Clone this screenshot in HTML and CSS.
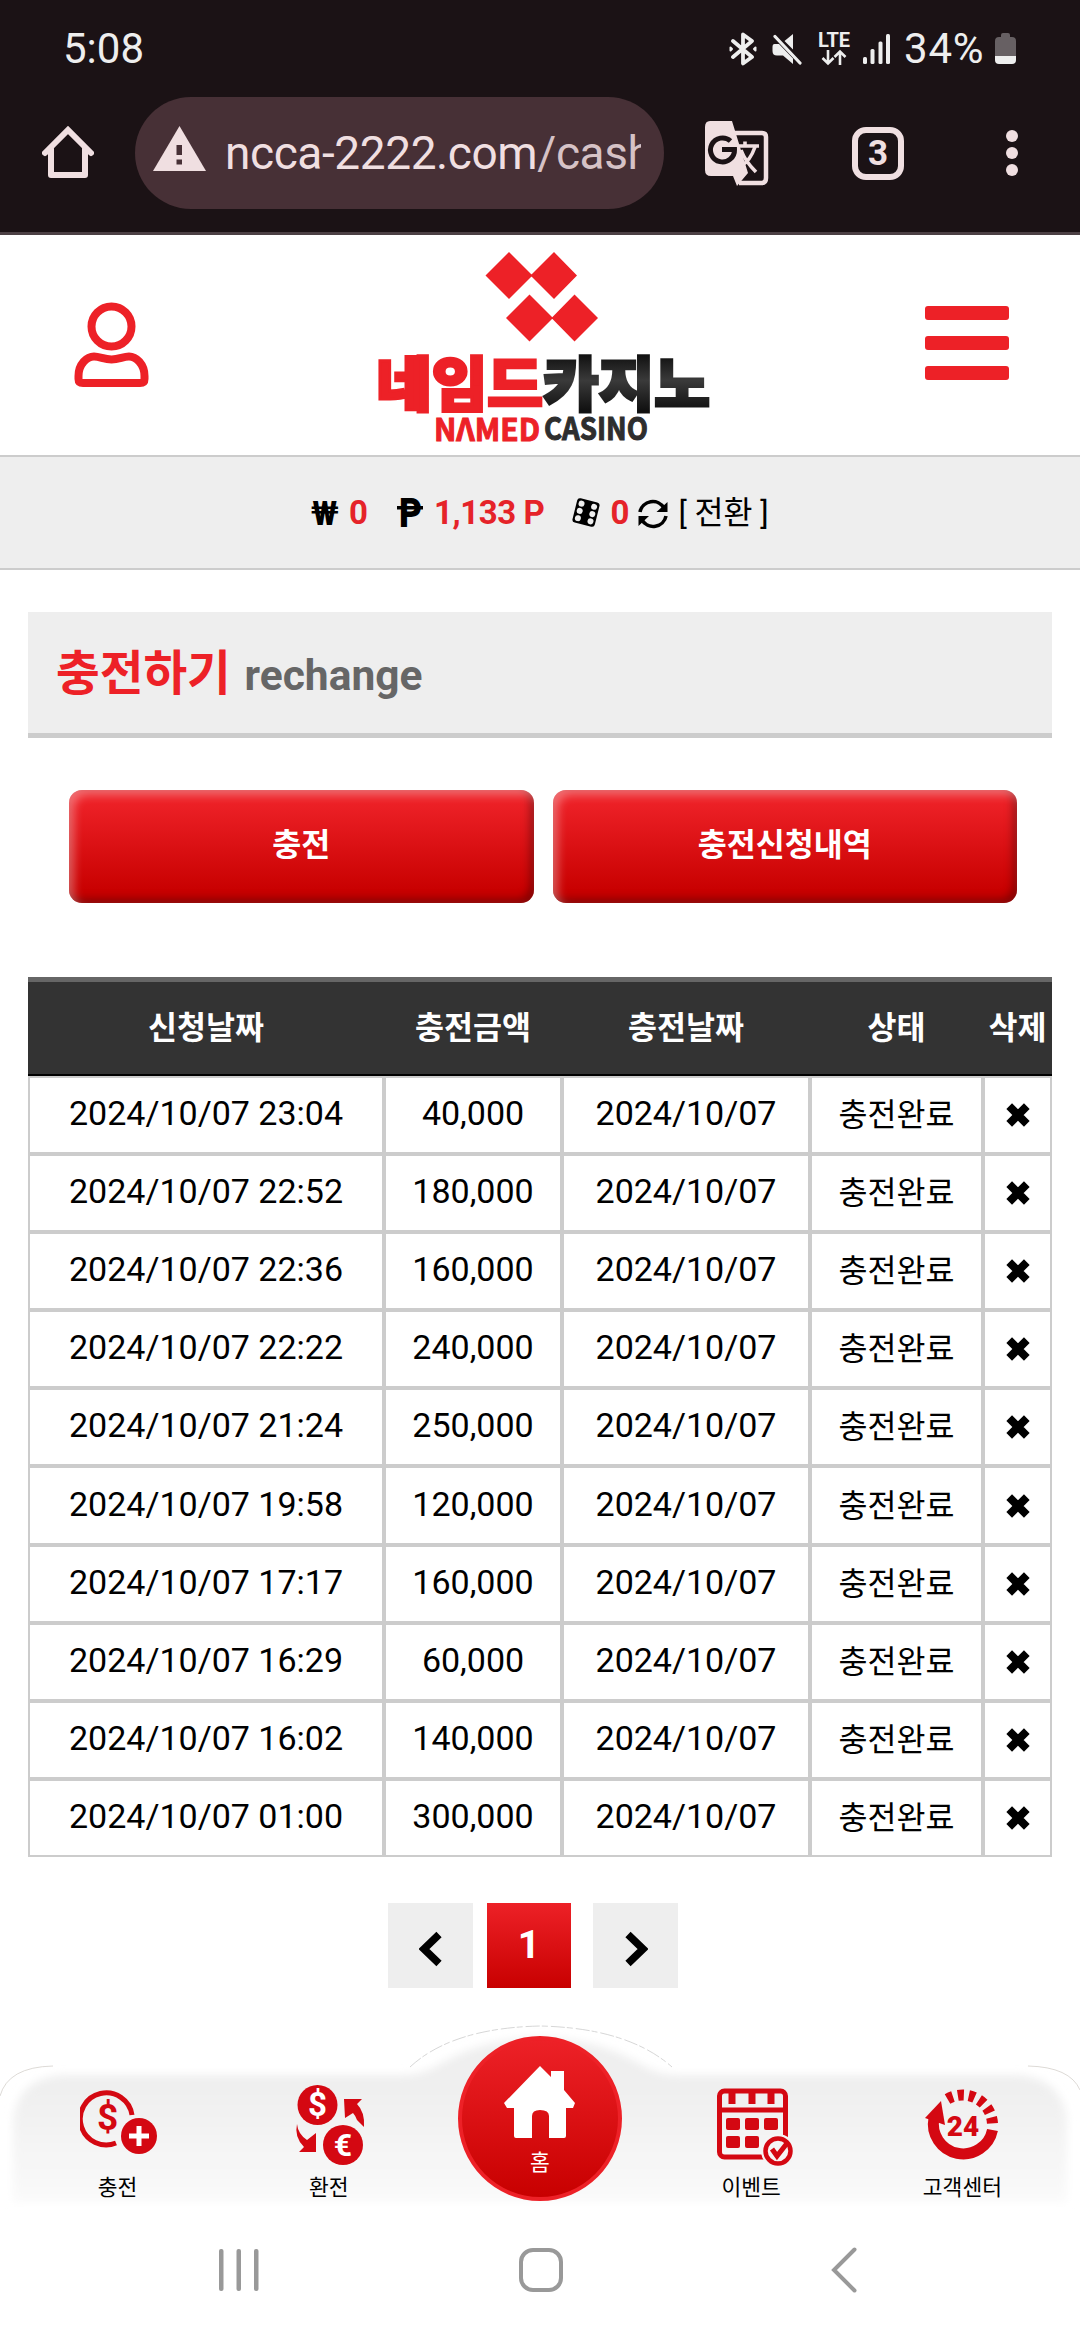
FILE: index.html
```html
<!DOCTYPE html>
<html lang="ko">
<head>
  <meta charset="UTF-8">
  <meta name="viewport" content="width=device-width, initial-scale=1.0">
  <title>충전하기</title>
  <link rel="stylesheet" href="styles.css">
</head>
<body>
  <!-- phone status bar -->
  <div class="status-bar">
    <span class="clock">5:08</span>
    <div class="status-icons">
      <svg class="bluetooth" width="28" height="34" viewBox="0 0 28 34" fill="none" stroke="#eee" stroke-width="3.8" stroke-linejoin="round" stroke-linecap="round">
        <path d="M4 9 L23 25 L14 31.500 V2.500 L23 9 L4 25"/>
        <path d="M1.500 15.500 V18.500 L3 17Z M26.500 15.500 V18.500 L25 17Z" stroke-width="2"/>
      </svg>
      <svg class="mute" width="32" height="32" viewBox="0 0 32 32">
        <path d="M2.500 11 H8 L22 25.500 V31 L12 22.500 H6 Q1.500 22.500 1.500 18 V14 Q1.500 11 3.500 11Z M13.500 8 L22 1 V16.500Z" fill="#eee"/>
        <path d="M4 3.500 L29 30" stroke="#eee" stroke-width="3.200" stroke-linecap="round"/>
      </svg>
      <div class="lte">
        <span>LTE</span>
        <svg width="26" height="17" viewBox="0 0 26 17" fill="none" stroke="#eee" stroke-width="2.600">
          <path d="M7 1 V14 M1.500 9 L7 14.500 L12.500 9 M19 16 V3 M13.500 8 L19 2.500 L24.500 8"/>
        </svg>
      </div>
      <svg class="signal" width="28" height="32" viewBox="0 0 28 32" fill="#eee">
        <rect x="0" y="24" width="4" height="7" rx="1.500"/>
        <rect x="7.500" y="16" width="4" height="15" rx="1.500"/>
        <rect x="15.500" y="8.500" width="4" height="22.500" rx="1.500"/>
        <rect x="23" y="1" width="4" height="30" rx="1.500"/>
      </svg>
      <span class="battery-text">34%</span>
      <svg class="battery" width="21" height="32" viewBox="0 0 21 32">
        <path d="M6 2 Q6 0 8 0 H13 Q15 0 15 2 V4 H17 Q21 4 21 8 V23 H0 V8 Q0 4 4 4 H6Z" fill="#676063"/>
        <path d="M0 23 H21 V27 Q21 31 17 31 H4 Q0 31 0 27Z" fill="#eee"/>
      </svg>
    </div>
  </div>

  <!-- browser toolbar -->
  <div class="toolbar">
    <svg class="tb-home" width="52" height="54" viewBox="0 0 52 54" fill="none" stroke="#f0dfe1" stroke-width="6" stroke-linejoin="round" stroke-linecap="round">
      <path d="M3 27 L26 4 L49 27" stroke-linejoin="miter"/>
      <path d="M9 23 V49 H43 V23"/>
    </svg>
    <div class="url-box">
      <svg width="53" height="46" viewBox="0 0 53 46">
        <path d="M26.500 0 L53 45 H0Z" fill="#f0dfe1"/>
        <path d="M23.500 19 H29 V29 H23.500Z M23.500 33.500 H29 V38.500 H23.500Z" fill="#473036"/>
      </svg>
      <span class="url">ncca-2222.com<span class="path">/cash</span></span>
    </div>
    <svg class="tb-translate" width="64" height="65" viewBox="0 0 64 65">
      <path d="M29 12 H57 Q61 12 61 16 V57 Q61 62 57 62 H34" fill="none" stroke="#f0dfe1" stroke-width="4.500"/>
      <path d="M5 0 H27 L43 52 L32 65 L28 55 H6 Q0 55 0 49 V6 Q0 0 5 0Z" fill="#f0dfe1"/>
      <path d="M28 25 H54 M40 20.500 V26 M50 26 Q45 40 37 44 M36 29 Q40 40 51 51" fill="none" stroke="#f0dfe1" stroke-width="3.600"/>
      <path d="M25.500 20 A12 12 0 1 0 29.500 28.500 H17" fill="none" stroke="#1b1215" stroke-width="5"/>
    </svg>
    <span class="tabs">3</span>
    <svg class="tb-more" width="12" height="48" viewBox="0 0 12 48" fill="#f0dfe1">
      <circle cx="6" cy="7" r="6"/>
      <circle cx="6" cy="24" r="6"/>
      <circle cx="6" cy="41" r="6"/>
    </svg>
  </div>

  <!-- site header -->
  <header class="site-header">
    <svg class="user" width="76" height="86" viewBox="0 0 76 86" fill="none" stroke="#ed2127" stroke-width="8">
      <circle cx="37.500" cy="24.500" r="20"/>
      <path d="M4.500 74 C4.500 62 13 54.500 20 54.500 C26 54.500 30 57.500 37.500 57.500 C45 57.500 49 54.500 55 54.500 C62 54.500 70.500 62 70.500 74 V77 Q70.500 81 66 81 H9 Q4.500 81 4.500 77Z"/>
    </svg>
    <svg class="logo" width="336" height="194" viewBox="0 0 336 194">
      <defs>
        <linearGradient id="dark" x1="0" y1="0" x2="0" y2="1">
          <stop offset="0.200" stop-color="#111"/>
          <stop offset="0.500" stop-color="#3a3a3a"/>
          <stop offset="0.850" stop-color="#111"/>
        </linearGradient>
      </defs>
      <g fill="#ed2127">
        <path d="M133 0 L156.500 23.500 L133 47 L109.500 23.500Z M178 0 L201 23.500 L178 47 L154.500 23.500Z"/>
        <path d="M153.500 42.500 L177 66 L153.500 89.500 L130 66Z M198.500 42.500 L222 66 L198.500 89.500 L175.500 66Z"/>
      </g>
      <text class="logo-ko" x="0" y="154" textLength="167" lengthAdjust="spacingAndGlyphs" fill="#ed2127" stroke="#ed2127">네임드</text>
      <text class="logo-ko" x="167" y="154" textLength="167" lengthAdjust="spacingAndGlyphs" fill="url(#dark)" stroke="url(#dark)">카지노</text>
      <text class="logo-en" x="58" y="189" textLength="106" lengthAdjust="spacingAndGlyphs" fill="#ed2127" stroke="#ed2127">NΛMED</text>
      <text class="logo-en" x="168" y="188" textLength="104" lengthAdjust="spacingAndGlyphs" fill="#2e2e2e" stroke="#2e2e2e">CASINO</text>
    </svg>
    <div class="menu"><i></i><i></i><i></i></div>
  </header>

  <div class="balance">
    <b class="won">₩</b>
    <b class="num">0</b>
    <svg class="peso" width="27" height="32" viewBox="0 0 27 32">
      <text x="2" y="30" textLength="23" lengthAdjust="spacingAndGlyphs">P</text>
      <rect x="0" y="9" width="26" height="3.500"/>
    </svg>
    <b class="num point">1,133 P</b>
    <svg class="dice" width="30" height="31" viewBox="0 0 30 31">
      <g transform="rotate(14 15 15.500)">
        <rect x="3.500" y="3" width="23" height="25" rx="3"/>
        <g fill="#eee">
          <circle cx="8.500" cy="8" r="3"/><circle cx="8.500" cy="15.500" r="3"/><circle cx="8.500" cy="23" r="3"/>
          <circle cx="21.500" cy="8" r="3"/><circle cx="21.500" cy="15.500" r="3"/><circle cx="21.500" cy="23" r="3"/>
        </g>
      </g>
    </svg>
    <b class="num">0</b>
    <svg class="refresh" width="30" height="32" viewBox="0 0 30 32">
      <path d="M2 14 A13 13 0 0 1 26 10 M28 18 A13 13 0 0 1 4 22" fill="none" stroke="#000" stroke-width="3.600"/>
      <path d="M29.500 4 V14 H18.500Z M0.500 28 V18 H11Z"/>
    </svg>
    <span class="change">[ 전환 ]</span>
  </div>

  <main class="content">
    <h1 class="title">충전하기 <span>rechange</span></h1>

    <div class="buttons">
      <button type="button">충전</button>
      <button type="button">충전신청내역</button>
    </div>

    <table class="history">
      <thead>
        <tr>
          <th class="c-req">신청날짜</th>
          <th class="c-amt">충전금액</th>
          <th class="c-date">충전날짜</th>
          <th class="c-state">상태</th>
          <th class="c-del">삭제</th>
        </tr>
      </thead>
      <tbody id="rows"></tbody>
    </table>

    <div class="paging">
      <a class="prev"><svg width="24" height="36" viewBox="0 0 24 36"><path d="M20 3.500 L5 18 L20 32.500" fill="none" stroke="#000" stroke-width="7.500"/></svg></a>
      <a class="on">1</a>
      <a class="next"><svg width="24" height="36" viewBox="0 0 24 36"><path d="M4 3.500 L19 18 L4 32.500" fill="none" stroke="#000" stroke-width="7.500"/></svg></a>
    </div>
  </main>

  <!-- bottom menu -->
  <nav class="bottom-nav">
    <svg class="nav-bg" width="1080" height="190" viewBox="0 0 1080 190">
      <defs>
        <linearGradient id="bar" x1="0" y1="0" x2="0" y2="1">
          <stop offset="0.300" stop-color="#efefef"/>
          <stop offset="1" stop-color="#fafafa"/>
        </linearGradient>
        <filter id="soft" x="-5%" y="-10%" width="110%" height="120%"><feGaussianBlur stdDeviation="4"/></filter>
      </defs>
      <path d="M13 182 V100 Q17 60 60 55 H405 Q424 54 440 44 Q484 18 540 18 Q596 18 640 44 Q656 54 675 55 H1020 Q1063 60 1067 100 V182Z" fill="url(#bar)" filter="url(#soft)"/>
      <path d="M0 76 Q8 47 53 46 M1028 46 Q1070 47 1080 70" fill="none" stroke="#d4d0cc" stroke-width="0.800"/>
      <path d="M410 47 Q452 8 540 6 Q628 8 672 47" fill="none" stroke="#ccc" stroke-width="0.800" stroke-dasharray="14 2 6 3"/>
    </svg>

    <a class="nav-item">
      <svg class="shift" width="80" height="82" viewBox="0 0 80 82">
        <path d="M52 31 A26 26 0 1 0 36 59" fill="none" stroke="#d40812" stroke-width="5"/>
        <text class="sym" x="27.500" y="46" font-size="37" fill="#d40812">$</text>
        <circle cx="59" cy="52" r="18" fill="#d40812"/>
        <path d="M59 42 V62 M49 52 H69" stroke="#fff" stroke-width="5"/>
      </svg>
      <span>충전</span>
    </a>
    <a class="nav-item">
      <svg width="80" height="82" viewBox="0 0 80 82">
        <g fill="#d40812">
          <circle cx="28.500" cy="21" r="20"/>
          <circle cx="54" cy="61" r="20"/>
          <path d="M55 15 H73 L68 20 Q76 28 75 43 L68 36 Q66 31 64 29 L56 34Z"/>
          <path d="M8 40 Q9 50 18 56 L27 49 V68 H10 L15 63 Q5 53 8 40Z"/>
        </g>
        <text class="sym" x="28.500" y="32" font-size="33" fill="#fff">$</text>
        <text class="sym" x="54" y="72" font-size="32" fill="#fff">€</text>
      </svg>
      <span>환전</span>
    </a>
    <a class="nav-item nav-home">
      <div class="home-circle">
        <svg width="72" height="72" viewBox="0 0 72 72" fill="#fff">
          <path d="M36 0 L47 11 V5 H60 V24 L71 37 L69 42 H62 V70 Q62 72 60 72 H45 V50 Q45 44 36 44 Q28 44 28 50 V72 H12 Q10 72 10 70 V42 H3 L0 37Z"/>
        </svg>
        <span>홈</span>
      </div>
    </a>
    <a class="nav-item">
      <svg class="shift" width="80" height="82" viewBox="0 0 80 82">
        <rect x="5.500" y="7" width="66" height="66" rx="5" fill="none" stroke="#d40812" stroke-width="5"/>
        <path d="M5 26 H72" stroke="#d40812" stroke-width="5"/>
        <path d="M18 7 V20 M38 7 V20 M57 7 V20" stroke="#d40812" stroke-width="7"/>
        <g fill="#d40812">
          <rect x="12" y="34" width="14" height="12" rx="2"/><rect x="31" y="34" width="14" height="12" rx="2"/><rect x="50" y="34" width="14" height="12" rx="2"/>
          <rect x="12" y="52" width="14" height="12" rx="2"/><rect x="31" y="52" width="14" height="12" rx="2"/>
        </g>
        <circle cx="64" cy="67" r="17" fill="#f5f5f5"/>
        <circle cx="64" cy="67" r="12.500" fill="none" stroke="#d40812" stroke-width="4.500"/>
        <path d="M58 65 L63 72 L74 58" fill="none" stroke="#d40812" stroke-width="5"/>
      </svg>
      <span>이벤트</span>
    </a>
    <a class="nav-item">
      <svg width="80" height="82" viewBox="0 0 80 82">
        <path d="M12 34 A29 29 0 0 0 70.500 46" fill="none" stroke="#d40812" stroke-width="11"/>
        <path d="M25.500 15 A30 30 0 0 1 70.500 42" fill="none" stroke="#d40812" stroke-width="11" stroke-dasharray="6 5"/>
        <path d="M3 34 L19 17 L23 41Z" fill="#d40812"/>
        <text class="sym num24" x="41" y="52" font-size="28" fill="#d40812">24</text>
      </svg>
      <span>고객센터</span>
    </a>
  </nav>

  <!-- system navigation -->
  <div class="system-nav">
    <svg class="sys-recent" width="40" height="44" viewBox="0 0 40 44" fill="#999">
      <rect x="0" y="1" width="4.500" height="42" rx="2"/><rect x="17.500" y="1" width="4.500" height="42" rx="2"/><rect x="35" y="1" width="4.500" height="42" rx="2"/>
    </svg>
    <svg class="sys-home" width="44" height="44" viewBox="0 0 44 44">
      <rect x="2" y="2" width="40" height="40" rx="12" fill="none" stroke="#999" stroke-width="4"/>
    </svg>
    <svg class="sys-back" width="26" height="46" viewBox="0 0 26 46">
      <path d="M23.500 2.500 L3 23 L23.500 43.500" fill="none" stroke="#999" stroke-width="4" stroke-linecap="round"/>
    </svg>
  </div>

  <script>
    const rows = [
      ['2024/10/07 23:04', '40,000'],
      ['2024/10/07 22:52', '180,000'],
      ['2024/10/07 22:36', '160,000'],
      ['2024/10/07 22:22', '240,000'],
      ['2024/10/07 21:24', '250,000'],
      ['2024/10/07 19:58', '120,000'],
      ['2024/10/07 17:17', '160,000'],
      ['2024/10/07 16:29', '60,000'],
      ['2024/10/07 16:02', '140,000'],
      ['2024/10/07 01:00', '300,000']
    ];

    const icon = '<svg width="24" height="24" viewBox="0 0 24 24"><path d="M3.200 3.200 L20.800 20.800 M20.800 3.200 L3.200 20.800" stroke="#000" stroke-width="8"/></svg>';

    document.getElementById('rows').innerHTML = rows.map(function(row) {
      return '<tr><td>' + row[0] + '</td><td>' + row[1] + '</td><td>' + row[0].split(' ')[0] +
        '</td><td class="state">충전완료</td><td class="del">' + icon + '</td></tr>';
    }).join('');
  </script>
</body>
</html>
```

FILE: styles.css
```css
* {
  box-sizing: border-box;
}

body {
  margin: 0;
  width: 1080px;
  height: 2340px;
  overflow: hidden;
  background: #fff;
  color: #000;
  font-family: Roboto, "Noto Sans CJK KR", sans-serif;
}

svg {
  display: block;
  flex: none;
}

/* status bar */
.status-bar {
  display: flex;
  justify-content: space-between;
  align-items: center;
  height: 97px;
  padding: 0 64px 0 63px;
  background: #1b1215;
  color: #eee;
  font-size: 42px;
  line-height: 48px;
}

.status-icons {
  display: flex;
  align-items: center;
}

.mute {
  margin-left: 14px;
}

.lte {
  display: flex;
  flex-direction: column;
  align-items: center;
  width: 34px;
  margin-left: 14px;
  font-size: 20px;
  font-weight: 700;
  line-height: 17px;
}

.signal {
  margin-left: 12px;
}

.battery-text {
  margin-left: 13px;
  width: 84px;
  letter-spacing: 0.8px;
}

.battery {
  margin-left: 7px;
}

/* browser toolbar */
.toolbar {
  display: flex;
  align-items: center;
  height: 138px;
  padding: 0 62px 23px 42px;
  background: #1b1215;
  border-bottom: 3px solid #4c4044;
  color: #f0dfe1;
}

.url-box {
  display: flex;
  align-items: center;
  width: 529px;
  height: 112px;
  margin-left: 41px;
  padding: 0 23px 0 18px;
  border-radius: 56px;
  background: #473036;
}

.url-box svg {
  margin-top: -8px;
}

.url {
  flex: 1;
  margin-left: 19px;
  overflow: hidden;
  white-space: nowrap;
  font-size: 46px;
  letter-spacing: -0.4px;
  line-height: 56px;
}

.path {
  color: #d6c2c6;
}

.tb-translate {
  margin-left: 41px;
}

.tabs {
  width: 52px;
  height: 53px;
  margin-left: 83px;
  border: 6px solid #f0dfe1;
  border-radius: 14px;
  text-align: center;
  font-size: 35px;
  font-weight: 700;
  line-height: 41px;
}

.tb-more {
  margin-left: auto;
}

/* site header */
.site-header {
  display: flex;
  align-items: flex-start;
  height: 220px;
  padding-left: 74px;
}

.user {
  margin-top: 67px;
}

.logo {
  margin: 17px 0 0 226px;
  overflow: visible;
}

.logo-ko {
  font-family: "Noto Sans CJK KR", sans-serif;
  font-size: 59px;
  font-weight: 900;
  stroke-width: 3px;
}

.logo-en {
  font-family: "Noto Sans CJK KR", sans-serif;
  font-size: 31px;
  font-weight: 700;
  stroke-width: 1px;
}

.menu {
  display: flex;
  flex-direction: column;
  gap: 16px;
  margin: 71px 0 0 213px;
}

.menu i {
  width: 84px;
  height: 14px;
  border-radius: 3px;
  background: #ed2127;
}

/* balance */
.balance {
  display: flex;
  align-items: center;
  height: 115px;
  padding-left: 311px;
  border-top: 2px solid #ccc;
  border-bottom: 2px solid #ccc;
  background: #eee;
  font-size: 33px;
  line-height: 40px;
  white-space: nowrap;
}

.num {
  color: #e52329;
}

.won {
  width: 29px;
  margin-right: 9px;
  font-size: 34px;
}

.peso {
  margin: 0 10px 0 29px;
  overflow: visible;
  font-size: 40px;
  font-weight: 900;
}

.point {
  letter-spacing: -0.4px;
}

.dice {
  margin: 0 9px 0 27px;
}

.refresh {
  margin: 2px 10px 0 9px;
}

.change {
  padding-top: 3px;
  font-size: 31.5px;
}

/* page */
.content {
  padding: 42px 28px 0;
}

.title {
  height: 126px;
  margin: 0;
  padding-left: 28px;
  border-bottom: 5px solid #ccc;
  background: #eee;
  color: #ed2127;
  font-size: 47.5px;
  font-weight: 700;
  line-height: 124px;
}

.title span {
  margin-left: 2px;
  color: #666;
  font-size: 42.5px;
}

.buttons {
  display: flex;
  gap: 19px;
  padding: 52px 35px 74px 41px;
}

.buttons button {
  flex: 1;
  height: 113px;
  padding: 0 0 9px;
  border: none;
  border-radius: 13px;
  background: linear-gradient(#ed2127 10%, #c80000 90%);
  box-shadow: inset 5px 5px 10px rgba(255, 255, 255, 0.35), inset -4px -4px 9px rgba(0, 0, 0, 0.35);
  color: #fff;
  font-family: Roboto, "Noto Sans CJK KR", sans-serif;
  font-size: 31.5px;
  font-weight: 700;
}

.history {
  width: 1024px;
  table-layout: fixed;
  border-collapse: separate;
  border-spacing: 0;
  text-align: center;
  font-size: 34px;
  line-height: 40px;
}

.history th {
  height: 99px;
  padding: 2px 0 0;
  border-top: 5px solid #666;
  border-bottom: 2px solid #000;
  background: #333;
  color: #fff;
  font-size: 31.5px;
  font-weight: 700;
  white-space: nowrap;
}

.history td {
  height: 78.1px;
  padding: 0 0 4px;
  border: 2px solid #ccc;
}

.c-req { width: 356px; }
.c-amt { width: 178px; }
.c-date { width: 248px; }
.c-state { width: 173px; }
.c-del { width: 69px; }

.history td.state {
  padding: 2px 0 0;
  font-size: 31.5px;
}

.history td.del {
  padding: 0;
}

.del svg {
  margin: 0 auto;
}

.paging {
  display: flex;
  align-items: center;
  height: 85px;
  margin-top: 46px;
  padding-left: 360px;
}

.paging a {
  display: flex;
  align-items: center;
  justify-content: center;
  width: 85px;
  height: 85px;
  background: #eee;
}

.paging .prev svg,
.paging .next svg {
  margin-top: 8px;
}

.paging .on {
  width: 84px;
  margin: 0 22px 0 14px;
  padding-bottom: 1px;
  background: linear-gradient(#ed2127, #c80000);
  color: #fff;
  font-size: 39px;
  font-weight: 700;
}

/* bottom menu */
.bottom-nav {
  position: relative;
  display: flex;
  height: 190px;
  margin-top: 32px;
  padding: 0 12px;
}

.nav-bg {
  position: absolute;
  left: 0;
  top: 0;
}

.nav-item {
  position: relative;
  flex: 1;
  display: flex;
  flex-direction: column;
  align-items: center;
  padding-top: 64px;
  font-size: 21.5px;
  line-height: 28px;
}

.nav-item > span {
  margin-top: 8px;
}

.nav-item .shift {
  margin-left: 5px;
}

.sym {
  font-weight: 700;
  text-anchor: middle;
}

.num24 {
  font-weight: 900;
}

.nav-home {
  padding-top: 16px;
}

.home-circle {
  display: flex;
  flex-direction: column;
  align-items: center;
  width: 164px;
  height: 165px;
  padding-top: 26px;
  border: 4px solid #ed2127;
  border-radius: 50%;
  background: linear-gradient(#ed2127, #c80000);
  color: #fff;
}

.home-circle span {
  margin-top: 11px;
}

/* system navigation */
.system-nav {
  display: flex;
  align-items: center;
  height: 130px;
  padding: 0 223px 10px 219px;
}

.sys-home {
  margin-left: 260px;
}

.sys-back {
  margin-left: 268px;
}
```
